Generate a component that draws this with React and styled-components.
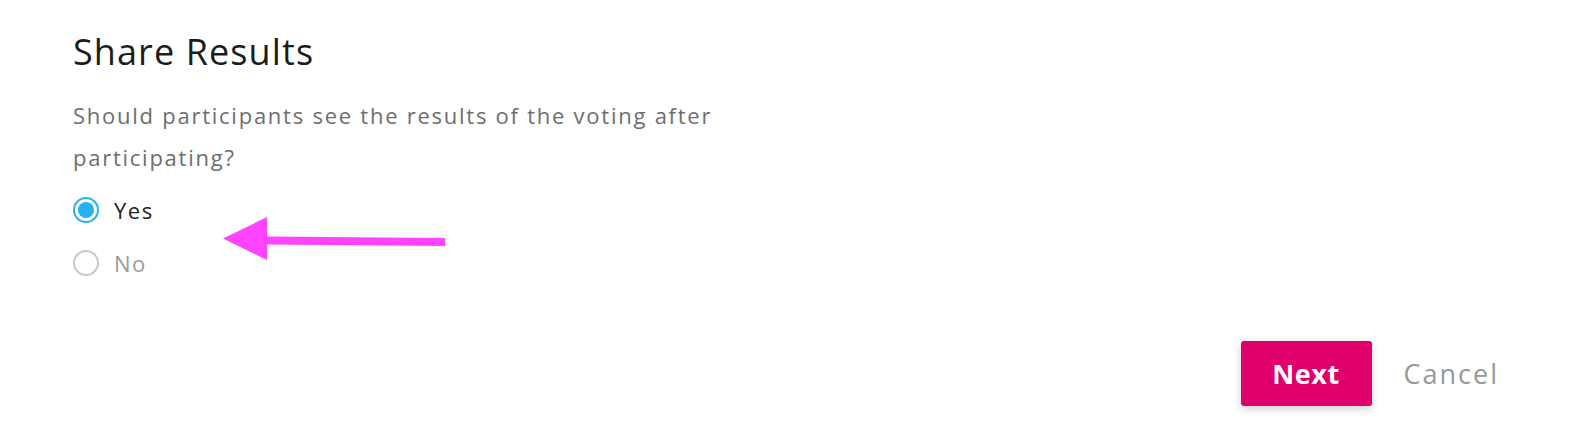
import React, { useState } from "react";
import styled, { createGlobalStyle } from "styled-components";

const Global = createGlobalStyle`
  html, body { margin: 0; padding: 0; background: #fff; }
  body { font-family: "Open Sans", Lato, Arial, sans-serif; }
`;

const Page = styled.div`
  position: relative;
  width: 1570px;
  height: 430px;
  box-sizing: border-box;
  padding: 30px 71px 0 73px;
  display: flex;
  flex-direction: column;
`;

const Title = styled.h2`
  margin: 0;
  font-size: 36px;
  line-height: 44px;
  font-weight: 400;
  color: #1c1c1c;
  letter-spacing: 1.1px;
`;

const Description = styled.p`
  margin: 20px 0 0;
  width: 720px;
  font-size: 22px;
  line-height: 42px;
  color: #6e6e6e;
  letter-spacing: 1.75px;
`;

const RadioGroup = styled.div`
  display: flex;
  flex-direction: column;
  gap: 13px;
  margin-top: 12px;
`;

const RadioRow = styled.label`
  display: flex;
  align-items: center;
  gap: 15px;
  height: 40px;
  cursor: pointer;
  font-size: 22px;
  color: ${(p) => (p.$checked ? "#222" : "#9a9a9a")};
  letter-spacing: 1.5px;
`;

const Circle = styled.span`
  width: 26px;
  height: 26px;
  box-sizing: border-box;
  border-radius: 50%;
  border: 2px solid ${(p) => (p.$checked ? "#27b1f2" : "#c9c9c9")};
  display: flex;
  align-items: center;
  justify-content: center;
  background: #fff;
  &::after {
    content: "";
    width: 16px;
    height: 16px;
    border-radius: 50%;
    background: ${(p) => (p.$checked ? "#27b1f2" : "transparent")};
  }
`;

const Footer = styled.div`
  display: flex;
  justify-content: flex-end;
  align-items: center;
  gap: 32px;
  margin-top: 58px;
`;

const PrimaryButton = styled.button`
  width: 131px;
  height: 65px;
  border: none;
  border-radius: 3px;
  background: #e0006c;
  color: #fff;
  font-family: inherit;
  font-size: 27px;
  font-weight: 700;
  letter-spacing: 0.6px;
  box-shadow: 0 3px 8px rgba(0, 0, 0, 0.18);
  cursor: pointer;
`;

const TextButton = styled.button`
  border: none;
  background: none;
  padding: 0;
  font-family: inherit;
  font-size: 27px;
  color: #989898;
  letter-spacing: 2px;
  cursor: pointer;
`;

const Annotation = styled.svg`
  position: absolute;
  left: 215px;
  top: 205px;
`;

const options = ["Yes", "No"];

export default function App() {
  const [value, setValue] = useState("Yes");
  return (
    <Page>
      <Global />
      <Title>Share Results</Title>
      <Description>
        Should participants see the results of the voting after participating?
      </Description>
      <RadioGroup>
        {options.map((o) => (
          <RadioRow key={o} $checked={value === o} onClick={() => setValue(o)}>
            <Circle $checked={value === o} />
            {o}
          </RadioRow>
        ))}
      </RadioGroup>
      <Footer>
        <PrimaryButton>Next</PrimaryButton>
        <TextButton>Cancel</TextButton>
      </Footer>
      <Annotation width="240" height="60" viewBox="0 0 240 60">
        <polygon points="52,31.5 230,33 230,41 52,39.5" fill="#ff44ff" />
        <polygon points="8,33.5 52,12 52,55" fill="#ff44ff" />
      </Annotation>
    </Page>
  );
}
